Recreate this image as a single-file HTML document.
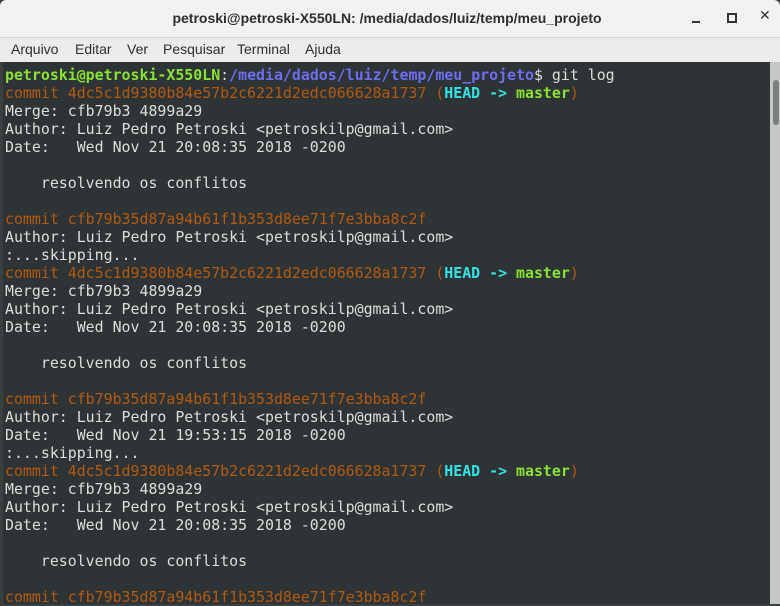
<!DOCTYPE html>
<html><head><meta charset="utf-8"><style>
html,body{margin:0;padding:0;width:780px;height:604px;overflow:hidden;background:#3a3f40;}
.title{position:absolute;left:0;top:0;width:780px;height:37px;background:#f2f2f2;border-bottom:1px solid #d6d6d6;border-radius:6px 6px 0 0;}
.title .t{position:absolute;left:0;right:6px;top:10px;text-align:center;font:bold 14px "Liberation Sans",sans-serif;color:#2e2e2e;}
.menu{position:absolute;left:0;top:38px;width:780px;height:24px;background:#ececec;font:14px "Liberation Sans",sans-serif;color:#2e2e2e;}
.menu span{position:absolute;top:3px;}
.term{position:absolute;left:3px;top:62px;width:767px;height:542px;background:#2e3436;}
.sb{position:absolute;left:770px;top:62px;width:10px;height:542px;background:#c6c8c7;}
.thumb{position:absolute;left:773px;top:80px;width:6px;height:45px;background:#7b7f7e;border-radius:3px;}
pre{position:absolute;left:5px;top:66px;margin:0;font:14.9px/18px "DejaVu Sans Mono","Liberation Mono",monospace;color:#dcdfd9;}
.o{color:#b3590e}.g{color:#8ae234;font-weight:bold}.b{color:#6d6ef0;font-weight:bold}.c{color:#34e2e2;font-weight:bold}
</style></head><body>
<div class="title"><div class="t">petroski@petroski-X550LN: /media/dados/luiz/temp/meu_projeto</div>
<div style="position:absolute;left:692px;top:21px;width:8px;height:2px;background:#333"></div>
<div style="position:absolute;left:727px;top:13px;width:6px;height:6px;border:2px solid #333"></div>
<div style="position:absolute;left:759px;top:8px;font:bold 14px 'DejaVu Sans',sans-serif;color:#333">✕</div>
</div>
<div class="menu"><span style="left:11px">Arquivo</span><span style="left:75px">Editar</span><span style="left:127px">Ver</span><span style="left:163px">Pesquisar</span><span style="left:237px">Terminal</span><span style="left:305px">Ajuda</span></div>
<div class="term"></div>
<div class="sb"></div><div class="thumb"></div>
<pre><span class="g">petroski@petroski-X550LN</span>:<span class="b">/media/dados/luiz/temp/meu_projeto</span>$ git log
<span class="o">commit 4dc5c1d9380b84e57b2c6221d2edc066628a1737 (</span><span class="c">HEAD -&gt; </span><span class="g">master</span><span class="o">)</span>
Merge: cfb79b3 4899a29
Author: Luiz Pedro Petroski &lt;petroskilp@gmail.com&gt;
Date:   Wed Nov 21 20:08:35 2018 -0200

    resolvendo os conflitos

<span class="o">commit cfb79b35d87a94b61f1b353d8ee71f7e3bba8c2f</span>
Author: Luiz Pedro Petroski &lt;petroskilp@gmail.com&gt;
:...skipping...
<span class="o">commit 4dc5c1d9380b84e57b2c6221d2edc066628a1737 (</span><span class="c">HEAD -&gt; </span><span class="g">master</span><span class="o">)</span>
Merge: cfb79b3 4899a29
Author: Luiz Pedro Petroski &lt;petroskilp@gmail.com&gt;
Date:   Wed Nov 21 20:08:35 2018 -0200

    resolvendo os conflitos

<span class="o">commit cfb79b35d87a94b61f1b353d8ee71f7e3bba8c2f</span>
Author: Luiz Pedro Petroski &lt;petroskilp@gmail.com&gt;
Date:   Wed Nov 21 19:53:15 2018 -0200
:...skipping...
<span class="o">commit 4dc5c1d9380b84e57b2c6221d2edc066628a1737 (</span><span class="c">HEAD -&gt; </span><span class="g">master</span><span class="o">)</span>
Merge: cfb79b3 4899a29
Author: Luiz Pedro Petroski &lt;petroskilp@gmail.com&gt;
Date:   Wed Nov 21 20:08:35 2018 -0200

    resolvendo os conflitos

<span class="o">commit cfb79b35d87a94b61f1b353d8ee71f7e3bba8c2f</span></pre>
</body></html>
